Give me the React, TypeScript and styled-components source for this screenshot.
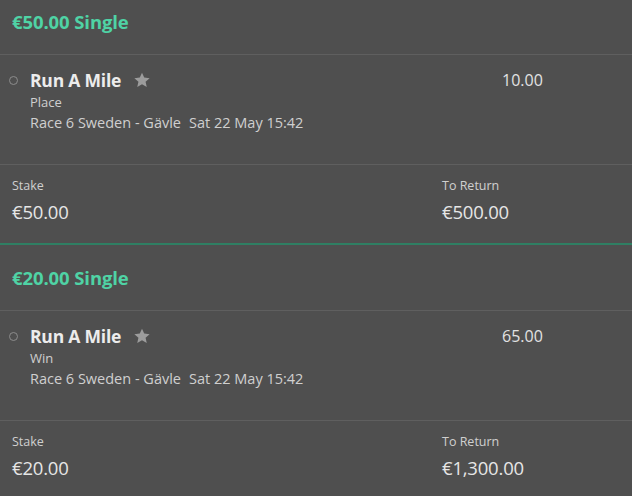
import React from 'react';
import styled, { createGlobalStyle } from 'styled-components';

const GlobalStyle = createGlobalStyle`
  html, body {
    margin: 0;
    padding: 0;
    background: #4f4f4f;
    overflow: hidden;
  }
  body {
    font-family: 'Open Sans', 'Noto Sans', sans-serif;
    color: #e4e4e4;
  }
`;

const Slip = styled.div`
  width: 632px;
  margin-top: -11px;
  background: #4f4f4f;
`;

const Bet = styled.section`
  border-bottom: 2px solid #2f7f63;
`;

const BetHeader = styled.div`
  height: 64px;
  display: flex;
  align-items: center;
  padding-left: 12px;
  padding-bottom: 1px;
  border-bottom: 1px solid #5f5f5f;
  color: #4fd3a5;
  font-size: 18.5px;
  font-weight: 700;
  letter-spacing: -0.1px;
`;

const Selection = styled.div`
  display: flex;
  padding: 14px 0 30px;
  border-bottom: 1px solid #5f5f5f;
`;

const Marker = styled.div`
  width: 30px;
  display: flex;
  justify-content: center;
  padding-top: 7px;
  & > span {
    width: 7px;
    height: 7px;
    border: 1px solid #8c8c8c;
    border-radius: 50%;
    margin-left: -3px;
  }
`;

const Info = styled.div`
  flex: 1;
  display: flex;
  flex-direction: column;
`;

const NameRow = styled.div`
  display: flex;
  align-items: center;
  gap: 12px;
  height: 22px;
`;

const Name = styled.span`
  font-size: 17.5px;
  font-weight: 700;
  color: #ececec;
  letter-spacing: -0.2px;
`;

const Market = styled.div`
  margin-top: 1px;
  line-height: 20px;
  font-size: 13px;
  color: #cfcfcf;
`;

const Event = styled.div`
  line-height: 22px;
  font-size: 14.5px;
  color: #cfcfcf;
  display: flex;
  gap: 8px;
`;

const Odds = styled.div`
  width: 130px;
  line-height: 22px;
  font-size: 16px;
  color: #e2e2e2;
`;

const StakeRow = styled.div`
  display: grid;
  grid-template-columns: 430px 1fr;
  padding: 12px 0 19px 12px;
`;

const Field = styled.div`
  display: flex;
  flex-direction: column;
`;

const Label = styled.span`
  line-height: 18px;
  font-size: 12.5px;
  color: #cfcfcf;
`;

const Amount = styled.span`
  margin-top: 5px;
  line-height: 24px;
  font-size: 18.5px;
  color: #e6e6e6;
  letter-spacing: -0.2px;
`;

const StarIcon = () => (
  <svg width="18" height="18" viewBox="0 0 24 24">
    <path
      d="M12 2.2l2.95 6.6 7.2.7-5.4 4.8 1.6 7.1L12 17.7l-6.35 3.7 1.6-7.1-5.4-4.8 7.2-.7z"
      fill="#9c9c9c"
    />
  </svg>
);

type BetData = {
  stake: string;
  market: string;
  odds: string;
  toReturn: string;
};

const bets: BetData[] = [
  { stake: '€50.00', market: 'Place', odds: '10.00', toReturn: '€500.00' },
  { stake: '€20.00', market: 'Win', odds: '65.00', toReturn: '€1,300.00' },
];

export default function App() {
  return (
    <>
      <GlobalStyle />
      <Slip>
        {bets.map((bet) => (
          <Bet key={bet.stake}>
            <BetHeader>{bet.stake} Single</BetHeader>
            <Selection>
              <Marker>
                <span />
              </Marker>
              <Info>
                <NameRow>
                  <Name>Run A Mile</Name>
                  <StarIcon />
                </NameRow>
                <Market>{bet.market}</Market>
                <Event>
                  <span>Race 6 Sweden - Gävle</span>
                  <span>Sat 22 May 15:42</span>
                </Event>
              </Info>
              <Odds>{bet.odds}</Odds>
            </Selection>
            <StakeRow>
              <Field>
                <Label>Stake</Label>
                <Amount>{bet.stake}</Amount>
              </Field>
              <Field>
                <Label>To Return</Label>
                <Amount>{bet.toReturn}</Amount>
              </Field>
            </StakeRow>
          </Bet>
        ))}
      </Slip>
    </>
  );
}
